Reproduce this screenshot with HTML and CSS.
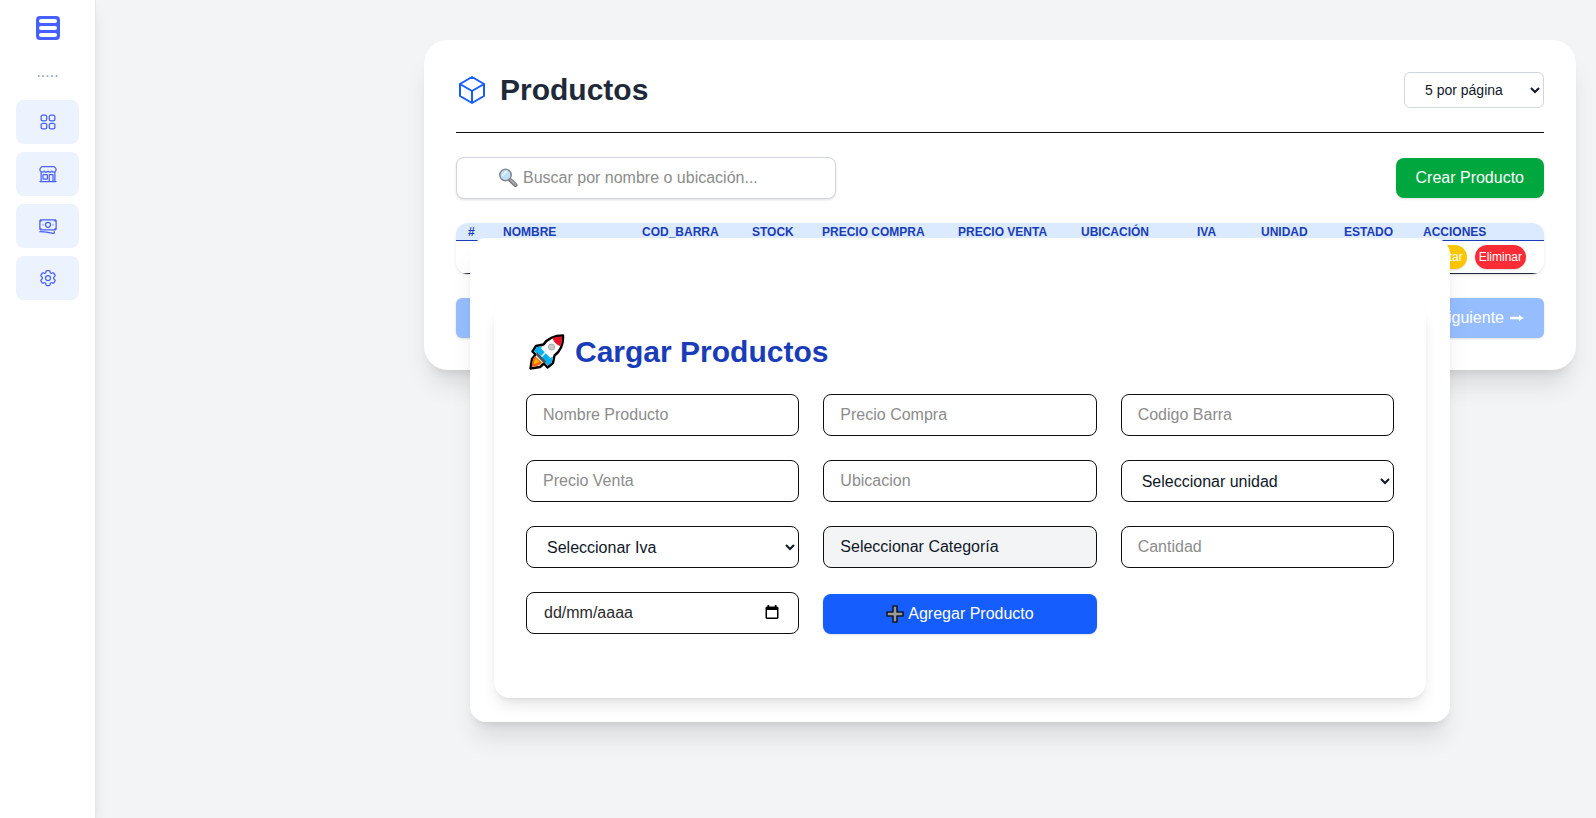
FILE: index.html
```html
<!DOCTYPE html>
<html lang="es">
<head>
<meta charset="utf-8">
<meta name="viewport" content="width=device-width, initial-scale=1">
<title>Productos</title>
<link rel="stylesheet" href="styles.css">
</head>
<body>
<div class="layout">
  <aside class="sidebar">
    <a class="logo" href="#" aria-label="Inicio">
      <svg width="24" height="24" viewBox="0 0 24 24"><rect width="24" height="24" rx="4" fill="#465fff"/><g fill="#fff"><rect x="3" y="3" width="18" height="4" rx="2"/><rect x="3" y="10" width="18" height="4" rx="2"/><rect x="3" y="17" width="18" height="4" rx="2"/></g></svg>
    </a>
    <span class="dots">.....</span>
    <nav class="menu">
      <a class="menu-item" href="#" aria-label="Panel">
        <svg class="icon" viewBox="0 0 24 24"><path d="M3.75 6A2.25 2.25 0 0 1 6 3.75h2.25A2.25 2.25 0 0 1 10.5 6v2.25a2.25 2.25 0 0 1-2.25 2.25H6a2.25 2.25 0 0 1-2.25-2.25V6ZM3.75 15.75A2.25 2.25 0 0 1 6 13.5h2.25a2.25 2.25 0 0 1 2.25 2.25V18a2.25 2.25 0 0 1-2.25 2.25H6A2.25 2.25 0 0 1 3.75 18v-2.25ZM13.5 6a2.25 2.25 0 0 1 2.25-2.25H18A2.25 2.25 0 0 1 20.25 6v2.25A2.25 2.25 0 0 1 18 10.5h-2.25a2.25 2.25 0 0 1-2.25-2.25V6ZM13.5 15.75a2.25 2.25 0 0 1 2.25-2.25H18a2.25 2.25 0 0 1 2.25 2.25V18A2.25 2.25 0 0 1 18 20.25h-2.25A2.25 2.25 0 0 1 13.5 18v-2.25Z"/></svg>
      </a>
      <a class="menu-item" href="#" aria-label="Tienda">
        <svg class="icon" viewBox="0 0 24 24"><path d="M13.5 21v-7.5a.75.75 0 0 1 .75-.75h3a.75.75 0 0 1 .75.75V21m-4.5 0H2.36m11.14 0H18m0 0h3.64m-1.39 0V9.349M3.75 21V9.349m0 0a3.001 3.001 0 0 0 3.75-.615A2.993 2.993 0 0 0 9.75 9.75c.896 0 1.7-.393 2.25-1.016a2.993 2.993 0 0 0 2.25 1.016c.896 0 1.7-.393 2.25-1.015a3.001 3.001 0 0 0 3.75.614m-16.5 0a3.004 3.004 0 0 1-.621-4.72l1.189-1.19A1.5 1.5 0 0 1 5.378 3h13.243a1.5 1.5 0 0 1 1.06.44l1.19 1.189a3 3 0 0 1-.621 4.72M6.75 18h3.75a.75.75 0 0 0 .75-.75V13.5a.75.75 0 0 0-.75-.75H6.75a.75.75 0 0 0-.75.75v3.75c0 .414.336.75.75.75Z"/></svg>
      </a>
      <a class="menu-item" href="#" aria-label="Pagos">
        <svg class="icon" viewBox="0 0 24 24"><path d="M2.25 18.75a60.07 60.07 0 0 1 15.797 2.101c.727.198 1.453-.342 1.453-1.096V18.75M3.75 4.5v.75A.75.75 0 0 1 3 6h-.75m0 0v-.375c0-.621.504-1.125 1.125-1.125H20.25M2.25 6v9m18-10.5v.75c0 .414.336.75.75.75h.75m-1.5-1.5h.375c.621 0 1.125.504 1.125 1.125v9.75c0 .621-.504 1.125-1.125 1.125h-.375m1.5-1.5H21a.75.75 0 0 0-.75.75v.75m0 0H3.75m0 0h-.375a1.125 1.125 0 0 1-1.125-1.125V15m1.5 1.5v-.75A.75.75 0 0 0 3 15h-.75M15 10.5a3 3 0 1 1-6 0 3 3 0 0 1 6 0Zm3 0h.008v.008H18V10.5Zm-12 0h.008v.008H6V10.5Z"/></svg>
      </a>
      <a class="menu-item" href="#" aria-label="Configuración">
        <svg class="icon" viewBox="0 0 24 24"><path d="M9.594 3.94c.09-.542.56-.94 1.11-.94h2.593c.55 0 1.02.398 1.11.94l.213 1.281c.063.374.313.686.645.87.074.04.147.083.22.127.325.196.72.257 1.075.124l1.217-.456a1.125 1.125 0 0 1 1.37.49l1.296 2.247a1.125 1.125 0 0 1-.26 1.431l-1.003.827c-.293.241-.438.613-.43.992a7.723 7.723 0 0 1 0 .255c-.008.378.137.75.43.991l1.004.827c.424.35.534.955.26 1.43l-1.298 2.247a1.125 1.125 0 0 1-1.369.491l-1.217-.456c-.355-.133-.75-.072-1.076.124a6.47 6.47 0 0 1-.22.128c-.331.183-.581.495-.644.869l-.213 1.281c-.09.543-.56.94-1.11.94h-2.594c-.55 0-1.019-.398-1.11-.94l-.213-1.281c-.062-.374-.312-.686-.644-.87a6.52 6.52 0 0 1-.22-.127c-.325-.196-.72-.257-1.076-.124l-1.217.456a1.125 1.125 0 0 1-1.369-.49l-1.297-2.247a1.125 1.125 0 0 1 .26-1.431l1.004-.827c.292-.24.437-.613.43-.991a6.932 6.932 0 0 1 0-.255c.007-.38-.138-.751-.43-.992l-1.004-.827a1.125 1.125 0 0 1-.26-1.43l1.297-2.247a1.125 1.125 0 0 1 1.37-.491l1.216.456c.356.133.751.072 1.076-.124.072-.044.146-.086.22-.128.332-.183.582-.495.644-.869l.214-1.28Z"/><path d="M15 12a3 3 0 1 1-6 0 3 3 0 0 1 6 0Z"/></svg>
      </a>
    </nav>
  </aside>

  <main class="content">
    <section class="card">
      <header class="card-header">
        <h1 class="title">
          <svg class="cube" viewBox="0 0 24 24"><path d="m21 7.5-9-5.25L3 7.5m18 0-9 5.25m9-5.25v9l-9 5.25M3 7.5l9 5.25M3 7.5v9l9 5.25m0-9v9"/></svg>
          Productos
        </h1>
        <select class="page-size" aria-label="Productos por página"><option>5 por página</option><option>10 por página</option></select>
      </header>

      <div class="toolbar">
        <label class="search">
          <svg class="search-icon" viewBox="0 0 20 20"><path d="M11 11l6.500 6" stroke="#6f7275" stroke-width="4" stroke-linecap="round"/><path d="M12.500 12l5 4.700" stroke="#a5a8aa" stroke-width="2" stroke-linecap="round"/><circle cx="7.500" cy="7" r="5.700" fill="#bfe0fb" stroke="#85898c" stroke-width="1.600"/><path d="M4 8l5-5" stroke="#e2f2fe" stroke-width="2"/></svg>
          <input class="search-input" type="text" placeholder="Buscar por nombre o ubicación..." aria-label="Buscar">
        </label>
        <button class="btn btn-green" type="button">Crear Producto</button>
      </div>

      <div class="table-wrap">
        <table class="table">
          <colgroup><col class="c-num"><col class="c-name"><col class="c-code"><col class="c-stock"><col class="c-buy"><col class="c-sell"><col class="c-place"><col class="c-iva"><col class="c-unit"><col class="c-state"><col></colgroup>
          <thead>
            <tr><th>#</th><th>NOMBRE</th><th>COD_BARRA</th><th>STOCK</th><th>PRECIO COMPRA</th><th>PRECIO VENTA</th><th>UBICACIÓN</th><th>IVA</th><th>UNIDAD</th><th>ESTADO</th><th>ACCIONES</th></tr>
          </thead>
          <tbody>
            <tr><td></td><td></td><td></td><td></td><td></td><td></td><td></td><td></td><td></td><td></td><td><div class="actions"><button class="pill pill-yellow" type="button">Editar</button><button class="pill pill-red" type="button">Eliminar</button></div></td></tr>
          </tbody>
        </table>
      </div>

      <div class="pager">
        <button class="btn btn-page" type="button" aria-label="Página anterior"><svg class="arrow" viewBox="0 0 14 8"><path d="M0 4l4-4v3h10v2H4v3z"/></svg></button>
        <button class="btn btn-page" type="button">Siguiente <svg class="arrow" viewBox="0 0 14 8"><path d="M0.500 4h10" stroke="#fff" stroke-width="2.400" stroke-linecap="round"/><path d="M9 0.800q2 2.200 5 3.200q-3 1-5 3.200z"/></svg></button>
      </div>
    </section>

    <div class="modal" role="dialog" aria-labelledby="modal-title">
      <form class="panel">
        <h2 class="panel-title" id="modal-title">
          <svg class="rocket" viewBox="0 0 36 36">
            <path d="M34 1.500C26 1.500 19 4 14.500 10.500L7 12l-3.500 5.500 3 3L3 25 1.500 34.500 11 33l4-3.500 3.500 4L24 29l1.500-7.500C31.500 17 34.500 10 34 1.500z" fill="#fff" stroke="#000" stroke-width="2.400" stroke-linejoin="round"/>
            <path d="M33 2.500c-4 0-7 .7-9.500 1.800 1.500 4 4 6.500 8 8 1.200-3 1.700-6 1.500-9.800z" fill="#e81224"/>
            <path d="M13.500 12l-6 1.300-2.500 4 3.500 3zM24 22.500l-1.300 6-4 3-3-4z" fill="#00b0f0"/>
            <path d="M8.500 18.500l3.500-4L21.500 24l-4.500 4z" fill="#00b0f0"/>
            <path d="M6.500 20.500l2-2L17.500 28l-2.500 1.500z" fill="#4a5358"/>
            <path d="M6 22c-2.500 3-3 6.500-3.300 10.800 4-.1 7.800-1.300 10.600-4z" fill="#f7630c"/>
            <path d="M7 24.500c-1.500 1.800-2 3.200-2.200 5.500 2.200-.2 4-.8 5.700-2.200z" fill="#ffb900"/>
            <path d="M12.500 22.500l6-6" stroke="#fff" stroke-width="1.400"/>
            <circle cx="22.500" cy="13" r="3" fill="#ccc" stroke="#a5a5a5" stroke-width="1"/>
          </svg>
          Cargar Productos
        </h2>
        <div class="fields">
          <input class="field" type="text" placeholder="Nombre Producto" aria-label="Nombre Producto">
          <input class="field" type="text" placeholder="Precio Compra" aria-label="Precio Compra">
          <input class="field" type="text" placeholder="Codigo Barra" aria-label="Codigo Barra">
          <input class="field" type="text" placeholder="Precio Venta" aria-label="Precio Venta">
          <input class="field" type="text" placeholder="Ubicacion" aria-label="Ubicacion">
          <select class="field" aria-label="Unidad"><option>Seleccionar unidad</option></select>
          <select class="field" aria-label="Iva"><option>Seleccionar Iva</option></select>
          <button class="field field-picker" type="button">Seleccionar Categoría</button>
          <input class="field" type="text" placeholder="Cantidad" aria-label="Cantidad">
          <label class="date">
            <input class="field field-date" type="text" placeholder="dd/mm/aaaa" aria-label="Fecha">
            <svg class="calendar" viewBox="0 0 14 16"><path fill-rule="evenodd" d="M2.500 1h1.700v1.500h5.600V1h1.700v1.500H12.300L13.500 3.500V14L12.500 15h-11L.5 14V3.500l1-1h1zM2 6v7.500h10V6z"/></svg>
          </label>
          <button class="btn btn-blue" type="button">
            <svg class="plus" viewBox="0 0 18 18"><path d="M7 1h4v6h6v4h-6v6H7v-6H1V7h6z" fill="#9a9a9a" stroke="#111827" stroke-width="1.600" stroke-linejoin="round"/></svg>
            Agregar Producto
          </button>
        </div>
      </form>
    </div>
  </main>
</div>
</body>
</html>
```
FILE: styles.css
```css
* { box-sizing: border-box; }

body {
  margin: 0;
  background: #f3f4f6;
  color: #101828;
  font-family: "Liberation Sans", Arial, sans-serif;
  font-size: 16px;
  line-height: 24px;
}

button, input, select { font: inherit; color: inherit; margin: 0; }
button { cursor: pointer; }
svg { display: block; flex: none; fill: none; }

.layout { display: flex; min-height: 100vh; }

.sidebar {
  display: flex;
  flex-direction: column;
  align-items: center;
  width: 96px;
  flex: none;
  padding: 16px;
  background: #fff;
  border-right: 1px solid #e5e7eb;
  box-shadow: 0 10px 15px -3px rgba(0, 0, 0, .1), 0 4px 6px -4px rgba(0, 0, 0, .1);
}
.dots { margin: 20px 0 16px; color: #99a1af; }
.menu { display: flex; flex-direction: column; gap: 8px; width: 100%; }
.menu-item {
  display: flex;
  align-items: center;
  justify-content: center;
  height: 44px;
  border-radius: 8px;
  background: #ecf3ff;
}
.icon {
  width: 20px;
  height: 20px;
  stroke: #465fff;
  stroke-width: 1.5;
  stroke-linecap: round;
  stroke-linejoin: round;
}

.content { position: relative; flex: 1; min-width: 0; padding: 40px 20px; }

.card {
  max-width: 1152px;
  margin-left: auto;
  padding: 32px;
  background: #fff;
  border-radius: 24px;
  box-shadow: 0 20px 25px -5px rgba(0, 0, 0, .1), 0 8px 10px -6px rgba(0, 0, 0, .1);
}
.card-header {
  display: flex;
  align-items: center;
  justify-content: space-between;
  padding-bottom: 24px;
  border-bottom: 1px solid #101010;
}
.title {
  display: flex;
  align-items: center;
  gap: 12px;
  margin: 0;
  color: #1e2939;
  font-size: 30px;
  line-height: 36px;
}
.cube {
  width: 32px;
  height: 32px;
  stroke: #155dfc;
  stroke-width: 1.5;
  stroke-linecap: round;
  stroke-linejoin: round;
}
.page-size {
  width: 140px;
  height: 36px;
  padding: 0 16px;
  border: 1px solid #d1d5dc;
  border-radius: 6px;
  background-color: #fff;
  font-size: 14px;
}

.toolbar {
  display: flex;
  align-items: center;
  justify-content: space-between;
  gap: 24px;
  margin: 24px 0;
}
.search { position: relative; width: 380px; }
.search-icon { position: absolute; left: 42px; top: 11px; width: 20px; height: 20px; }
.search-input {
  display: block;
  width: 100%;
  height: 42px;
  padding: 0 16px 0 66px;
  border: 1px solid #d1d5dc;
  border-radius: 8px;
  background: #fff;
  box-shadow: 0 1px 3px rgba(0, 0, 0, .1), 0 1px 2px -1px rgba(0, 0, 0, .1);
}
::placeholder { color: #8c8c8c; opacity: 1; }

.btn {
  display: flex;
  align-items: center;
  justify-content: center;
  gap: 6px;
  height: 40px;
  padding: 0 20px;
  border: 0;
  border-radius: 8px;
  color: #fff;
  box-shadow: 0 1px 3px rgba(0, 0, 0, .1), 0 1px 2px -1px rgba(0, 0, 0, .1);
}
.btn-green { background: #00a63e; }
.btn-blue { gap: 4px; align-self: end; background: #155dfc; }
.btn-page { border-radius: 6px; background: #96beff; }
.arrow { width: 14px; height: 8px; fill: #fff; }

.table-wrap {
  overflow: hidden;
  border-radius: 12px;
  box-shadow: 0 1px 3px rgba(0, 0, 0, .1), 0 1px 2px -1px rgba(0, 0, 0, .1);
}
.table {
  width: 100%;
  table-layout: fixed;
  border-collapse: separate;
  border-spacing: 0;
  font-size: 12px;
  line-height: 16px;
}
.table th {
  height: 18px;
  padding: 0 0 0 12px;
  border-bottom: 1px solid #193cb8;
  background: #dbeafe;
  color: #193cb8;
  text-align: left;
  white-space: nowrap;
}
.table td { padding: 4px 18px 4px 0; border-bottom: 1px solid #1e2939; }
.c-num { width: 35px; }
.c-name { width: 139px; }
.c-code { width: 110px; }
.c-stock { width: 70px; }
.c-buy { width: 136px; }
.c-sell { width: 123px; }
.c-place { width: 116px; }
.c-iva { width: 64px; }
.c-unit { width: 83px; }
.c-state { width: 79px; }
.actions { display: flex; justify-content: flex-end; gap: 8px; }
.pill {
  height: 24px;
  padding: 0 4px;
  border: 0;
  border-radius: 12px;
  color: #fff;
  box-shadow: 0 1px 2px rgba(0, 0, 0, .15);
}
.pill-yellow { background: #fdc700; }
.pill-red { background: #fb2c36; }

.pager { display: flex; justify-content: space-between; margin-top: 24px; }

.modal {
  position: absolute;
  top: 238px;
  right: 146px;
  width: 980px;
  max-width: calc(100% - 166px);
  padding: 64px 24px 24px;
  background: #fff;
  border-radius: 16px;
  box-shadow: 0 20px 25px -5px rgba(0, 0, 0, .1), 0 8px 10px -6px rgba(0, 0, 0, .1);
}
.panel {
  padding: 32px 32px 64px;
  background: #fff;
  border-radius: 16px;
  box-shadow: 0 10px 15px -3px rgba(0, 0, 0, .1), 0 4px 6px -4px rgba(0, 0, 0, .1);
}
.panel-title {
  display: flex;
  align-items: center;
  gap: 10px;
  margin: 0 0 24px;
  padding-left: 3px;
  color: #193cb8;
  font-size: 30px;
  line-height: 36px;
}
.rocket { width: 36px; height: 36px; }
.fields { display: grid; grid-template-columns: repeat(3, minmax(0, 1fr)); gap: 24px; }
.field {
  display: block;
  width: 100%;
  height: 42px;
  padding: 0 16px;
  border: 1px solid #101010;
  border-radius: 8px;
  background-color: #fff;
}
.field-picker { background-color: #f3f4f6; text-align: left; }
.date { position: relative; }
.field-date { padding-left: 17px; }
.field-date::placeholder { color: #2b2b2b; }
.calendar { position: absolute; right: 20px; top: 12px; width: 14px; height: 16px; fill: #000; }
.plus { width: 18px; height: 18px; }
```
